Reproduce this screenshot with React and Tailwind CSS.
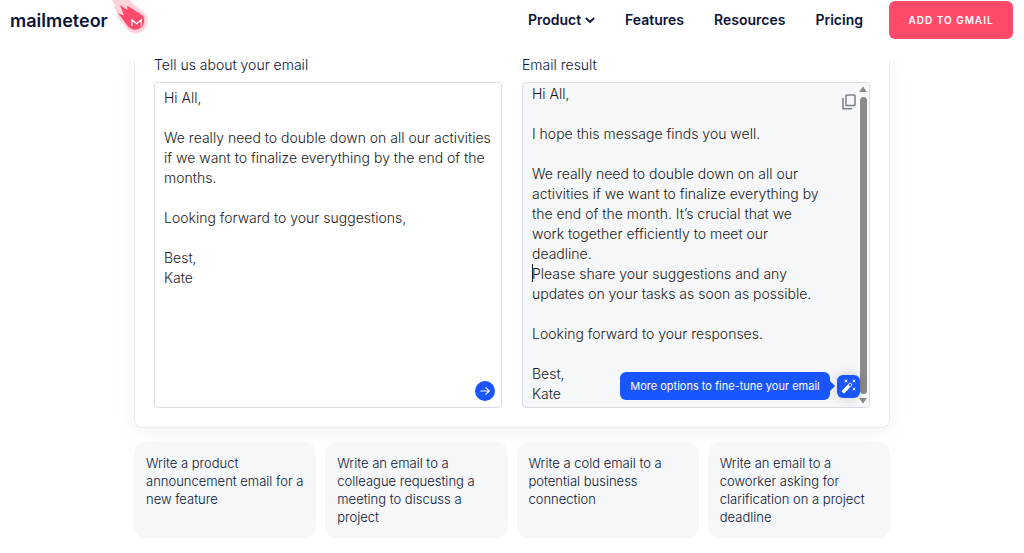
import React from "react";

const draft = `Hi All,

We really need to double down on all our activities if we want to finalize everything by the end of the months.

Looking forward to your suggestions,

Best,
Kate`;

const result = `Hi All,

I hope this message finds you well.

We really need to double down on all our activities if we want to finalize everything by the end of the month. It’s crucial that we work together efficiently to meet our deadline.
Please share your suggestions and any updates on your tasks as soon as possible.

Looking forward to your responses.

Best,
Kate`;

const prompts = [
  "Write a product announcement email for a new feature",
  "Write an email to a colleague requesting a meeting to discuss a project",
  "Write a cold email to a potential business connection",
  "Write an email to a coworker asking for clarification on a project deadline",
];

function Meteor() {
  return (
    <svg className="ml-px h-9 w-[42px]" viewBox="0 0 42 36" aria-hidden="true">
      <path
        d="M2 -1 L6 5 L5 7.500 L9 14 L8 16.500 L15.800 26 A12 12 0 1 0 36 13.500 L25 4 L19 -1 Z"
        fill="#ffd3dc"
      />
      <path
        d="M11 5 L18.500 10 L18 5.500 L33.500 15.300 A9 9 0 1 1 18.600 26 L9 13 L15 15.800 Z"
        fill="#ff4a6b"
      />
      <path d="M23 26 V19.700 L27.700 23.700 L32.400 19.700 V26" fill="none" stroke="#fff" strokeWidth="1.2" />
    </svg>
  );
}

function Wand() {
  return (
    <svg className="size-4" viewBox="0 0 24 24" fill="#fff" aria-hidden="true">
      <path d="M7.500 5.600 10 7 8.600 4.500 10 2 7.500 3.400 5 2l1.400 2.500L5 7zm12 9.800L17 14l1.400 2.500L17 19l2.500-1.400L22 19l-1.400-2.500L22 14zM22 2l-2.500 1.400L17 2l1.400 2.500L17 7l2.500-1.400L22 7l-1.400-2.500z" />
      <path d="M14.370 7.290a1 1 0 0 0-1.410 0L1.290 18.960a1 1 0 0 0 0 1.410l2.340 2.340c.390.390 1.020.390 1.410 0L16.700 11.050a1 1 0 0 0 0-1.410zm-1.030 5.490-2.120-2.120 2.440-2.440 2.120 2.120z" />
    </svg>
  );
}

export default function App() {
  return (
    <div className="min-h-screen bg-white font-['Inter',sans-serif] text-[#0b1437]">
      <header className="relative z-10 flex h-[60px] items-start justify-between bg-white pl-[10px] pr-[11px]">
        <a href="#home" className="flex items-start">
          <span className="pt-[7px] text-[18px] font-semibold leading-7">mailmeteor</span>
          <Meteor />
        </a>
        <div className="flex items-start gap-[26px]">
          <nav className="flex items-center gap-[30px] pt-[10px] text-[14px] font-semibold leading-5">
            <button type="button" className="flex items-center gap-1">
              Product
              <svg className="h-2 w-[10px]" viewBox="0 0 10 8" fill="none" stroke="currentColor" strokeWidth="1.8" aria-hidden="true">
                <path d="M0.800 2 L5 6 L9.200 2" />
              </svg>
            </button>
            <a href="#features">Features</a>
            <a href="#resources">Resources</a>
            <a href="#pricing">Pricing</a>
          </nav>
          <button type="button" className="mt-px h-[38px] w-[124px] rounded-md bg-[#ff4a6b] text-[10px] font-semibold tracking-widest text-white">
            ADD TO GMAIL
          </button>
        </div>
      </header>

      <main className="pb-[15px]">
        <div className="mx-auto max-w-[756px]">
          <section className="grid grid-cols-2 gap-5 rounded-b-lg border border-t-0 border-[#ebecee] bg-white px-[19px] pb-[19px] shadow-[0_4px_24px_rgba(0,0,0,0.05)]">
            <div className="flex flex-col gap-3">
              <label htmlFor="draft" className="relative z-20 text-[14px] font-light leading-[10px]">Tell us about your email</label>
              <div className="relative flex">
                <textarea
                  id="draft"
                  defaultValue={draft}
                  className="h-[326px] w-full resize-none overflow-hidden rounded border border-[#d6dce4] bg-white py-[5px] pl-[9px] pr-1 text-[14px] font-light leading-5 text-[#1b1b1b]"
                />
                <button type="button" aria-label="Generate" className="absolute bottom-[7px] right-[7px] flex size-5 items-center justify-center rounded-full bg-[#1a56ff]">
                  <svg className="size-3" viewBox="0 0 12 12" fill="none" stroke="#fff" strokeWidth="1.2" aria-hidden="true">
                    <path d="M1.500 6 H10 M6.500 2.300 L10.200 6 L6.500 9.700" />
                  </svg>
                </button>
              </div>
            </div>

            <div className="flex flex-col gap-3">
              <label htmlFor="result" className="relative z-20 text-[14px] font-light leading-[10px]">Email result</label>
              <div className="relative flex">
                <textarea
                  id="result"
                  defaultValue={result}
                  className="h-[326px] w-full resize-none overflow-hidden rounded border border-[#d6dce4] bg-[#f5f7f9] py-px pl-[9px] pr-11 text-[14px] font-light leading-5 text-[#1b1b1b]"
                />
                <div className="absolute left-[10px] top-[182px] h-[18px] w-px bg-[#1b1b1b]" />
                <div className="absolute inset-y-px right-px flex w-3 flex-col items-center justify-between rounded-r bg-[#fafafa] py-[3px]" aria-hidden="true">
                  <svg className="h-[7px] w-2" viewBox="0 0 8 7" fill="#8b8b8b"><path d="M4 0.500 L8 6 H0 Z" /></svg>
                  <div className="mb-[3px] mt-1 w-[7px] grow rounded-full bg-[#8b8b8b]" />
                  <svg className="h-[7px] w-2" viewBox="0 0 8 7" fill="#8b8b8b"><path d="M0 1 H8 L4 6.500 Z" /></svg>
                </div>
                <button type="button" aria-label="Copy" className="absolute right-[13px] top-3 flex size-4 items-center justify-center text-[#7a808b]">
                  <svg className="size-4" viewBox="0 0 16 16" fill="none" stroke="currentColor" strokeWidth="1.5" aria-hidden="true">
                    <rect x="5" y="1" width="9" height="10.500" rx="0.800" />
                    <path d="M2 4 V14.700 H11" />
                  </svg>
                </button>
                <div className="absolute bottom-2 right-[10px] flex items-center">
                  <div role="tooltip" className="flex h-7 w-[210px] items-center justify-center whitespace-nowrap rounded-md bg-[#1a56ff] text-[11px] leading-4 text-white">
                    More options to fine-tune your email
                  </div>
                  <svg className="mr-[2px] h-3 w-[5px]" viewBox="0 0 5 12" fill="#1a56ff" aria-hidden="true"><path d="M0 1 L5 6 L0 11 Z" /></svg>
                  <button type="button" aria-label="More options" className="flex size-[23px] items-center justify-center rounded-md bg-[#1a56ff] shadow-[0_0_12px_rgba(0,0,0,0.2)]">
                    <Wand />
                  </button>
                </div>
              </div>
            </div>
          </section>

          <ul className="relative mt-[14px] grid grid-cols-4 gap-[9px]">
            {prompts.map((prompt) => (
              <li key={prompt} className="flex">
                <button type="button" className="flex min-h-24 w-full items-start rounded-xl bg-[#f5f7f9] py-3 pl-3 pr-2 text-left text-[13px] font-light leading-[18px]">
                  {prompt}
                </button>
              </li>
            ))}
          </ul>
        </div>
      </main>
    </div>
  );
}
